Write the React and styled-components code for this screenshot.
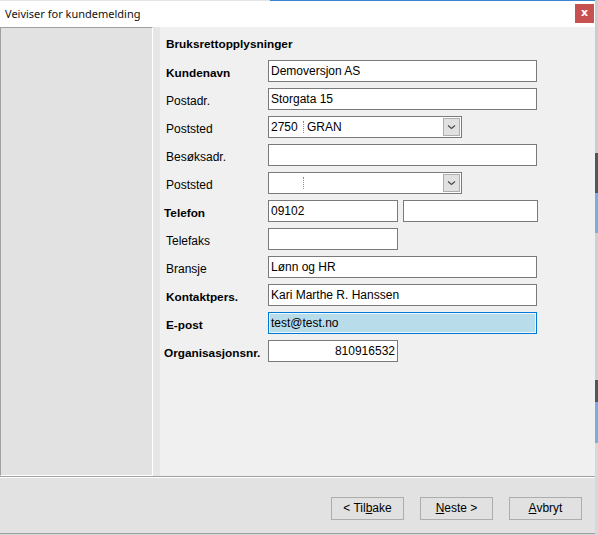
import React from "react";
import styled, { createGlobalStyle, css } from "styled-components";

const GlobalStyle = createGlobalStyle`
  html, body {
    margin: 0;
    padding: 0;
  }
  body {
    width: 598px;
    height: 535px;
    overflow: hidden;
    background: linear-gradient(
      to bottom,
      #cdcdcd 0 153px,
      #555555 153px 193px,
      #79ade0 193px 233px,
      #d0d0d0 233px 380px,
      #555555 380px 402px,
      #79ade0 402px 443px,
      #d8d8d8 443px
    );
  }
`;

const Window = styled.div`
  width: 595px;
  height: 534px;
  display: flex;
  flex-direction: column;
  font-family: "Liberation Sans", Arial, sans-serif;
  font-size: 12px;
  color: #000;
`;

const TitleBar = styled.div`
  height: 27px;
  flex: none;
  display: flex;
  justify-content: space-between;
  align-items: flex-start;
  background:
    linear-gradient(to right, #e4e4e4 0 270px, #3b85cf 270px) top / 100% 1px no-repeat,
    #ffffff;
`;

const Title = styled.div`
  padding: 6px 0 0 5px;
  font-family: "Noto Sans", "Open Sans", sans-serif;
  font-size: 11px;
  line-height: 16px;
  color: #111;
`;

const CloseButton = styled.div`
  width: 19px;
  height: 19px;
  margin: 4px 1px 0 0;
  background: #c75050;
  color: #fff;
  font-family: "DejaVu Sans", sans-serif;
  font-weight: bold;
  font-size: 11px;
  line-height: 18px;
  text-align: center;
`;

const Body = styled.div`
  height: 449px;
  flex: none;
  display: flex;
`;

const Sidebar = styled.div`
  width: 153px;
  box-sizing: border-box;
  background: #e2e2e2;
  border-top: 1px solid #a0a0a0;
  border-left: 1px solid #a0a0a0;
  border-right: 1px solid #ffffff;
  border-bottom: 1px solid #ffffff;
`;

const Gutter = styled.div`
  width: 7px;
  background: #e6e6e6;
`;

const Panel = styled.div`
  flex: 1;
  background: #f0f0f0;
  padding: 10px 0 0 6px;
`;

const Heading = styled.div`
  font-weight: bold;
  font-size: 11.8px;
  line-height: 14px;
  height: 14px;
  margin-bottom: 9px;
`;

const Form = styled.div`
  display: grid;
  grid-template-columns: 102px auto;
  grid-auto-rows: 22px;
  row-gap: 6px;
  justify-items: start;
`;

const Label = styled.div`
  align-self: center;
  padding-top: 3px;
  white-space: nowrap;
  ${(p) =>
    p.$bold &&
    css`
      font-weight: bold;
      font-size: 11.8px;
    `}
  ${(p) => p.$shift && `margin-left: -2px;`}
`;

const Field = styled.div`
  box-sizing: border-box;
  width: ${(p) => p.$w || 269}px;
  height: 22px;
  background: #fff;
  border: 1px solid #7a7a7a;
  padding: 0 2px;
  line-height: 20px;
  white-space: nowrap;
  overflow: hidden;
  text-align: ${(p) => (p.$right ? "right" : "left")};
  ${(p) =>
    p.$focus &&
    css`
      background: #b8dcea;
      border-color: #0078d7;
      box-shadow: inset 0 0 0 1px #eef6fa;
    `}
`;

const Pair = styled.div`
  display: flex;
  gap: 5px;
`;

const Combo = styled.div`
  box-sizing: border-box;
  width: 194px;
  height: 22px;
  background: #fff;
  border: 1px solid #7a7a7a;
  display: flex;
  align-items: center;
  padding: 0 1px 0 2px;
`;

const Code = styled.span`
  width: 32px;
  flex: none;
`;

const Divider = styled.span`
  width: 0;
  height: 12px;
  border-left: 1px dotted #8a8a8a;
  margin-right: 3px;
  flex: none;
`;

const ComboText = styled.span`
  flex: 1;
`;

const DropButton = styled.div`
  width: 17px;
  height: 18px;
  box-sizing: border-box;
  background: #e1e1e1;
  border: 1px solid #adadad;
  display: flex;
  align-items: center;
  justify-content: center;
`;

const Footer = styled.div`
  flex: 1;
  box-sizing: border-box;
  border-top: 1px solid #a0a0a0;
  box-shadow: inset 0 1px 0 #ffffff;
  border-bottom: 1px solid #a0a0a0;
  background: #e2e2e2;
  display: flex;
  justify-content: flex-end;
  align-items: flex-start;
  gap: 16px;
  padding: 20px 13px 0 0;
`;

const Button = styled.div`
  width: 73px;
  height: 23px;
  box-sizing: border-box;
  border: 1px solid #adadad;
  background: #e1e1e1;
  text-align: center;
  line-height: 21px;
  u {
    text-decoration: underline;
  }
`;

const Chevron = () => (
  <svg width="9" height="6" viewBox="0 0 9 6">
    <path d="M1 1.5 L4.5 4.5 L8 1.5" fill="none" stroke="#4a4a4a" strokeWidth="1.2" />
  </svg>
);

const Select = ({ code, name }) => (
  <Combo>
    <Code>{code}</Code>
    <Divider />
    <ComboText>{name}</ComboText>
    <DropButton>
      <Chevron />
    </DropButton>
  </Combo>
);

const App = () => (
  <>
    <GlobalStyle />
    <Window>
      <TitleBar>
        <Title>Veiviser for kundemelding</Title>
        <CloseButton>x</CloseButton>
      </TitleBar>
      <Body>
        <Sidebar />
        <Gutter />
        <Panel>
          <Heading>Bruksrettopplysninger</Heading>
          <Form>
            <Label $bold>Kundenavn</Label>
            <Field>Demoversjon AS</Field>

            <Label>Postadr.</Label>
            <Field>Storgata 15</Field>

            <Label>Poststed</Label>
            <Select code="2750" name="GRAN" />

            <Label>Besøksadr.</Label>
            <Field />

            <Label>Poststed</Label>
            <Select code="" name="" />

            <Label $bold $shift>Telefon</Label>
            <Pair>
              <Field $w={130}>09102</Field>
              <Field $w={135} />
            </Pair>

            <Label>Telefaks</Label>
            <Field $w={130} />

            <Label>Bransje</Label>
            <Field>Lønn og HR</Field>

            <Label $bold>Kontaktpers.</Label>
            <Field>Kari Marthe R. Hanssen</Field>

            <Label $bold>E-post</Label>
            <Field $focus>test@test.no</Field>

            <Label $bold $shift>Organisasjonsnr.</Label>
            <Field $w={130} $right>810916532</Field>
          </Form>
        </Panel>
      </Body>
      <Footer>
        <Button>
          &lt; Til<u>b</u>ake
        </Button>
        <Button>
          <u>N</u>este &gt;
        </Button>
        <Button>
          <u>A</u>vbryt
        </Button>
      </Footer>
    </Window>
  </>
);

export default App;
